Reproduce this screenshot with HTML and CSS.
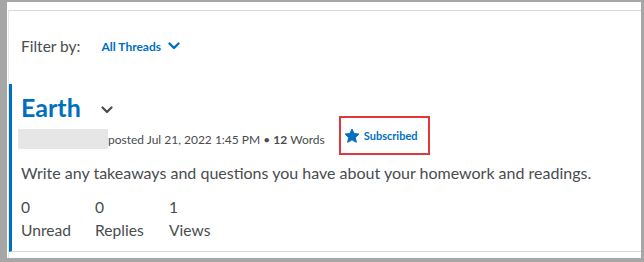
FILE: index.html
```html
<!DOCTYPE html>
<html lang="en">
<head>
    <meta charset="UTF-8">
    <title>Discussion - Earth</title>
    <link rel="stylesheet" href="styles.css">
</head>
<body>
    <div class="frame">
        <div class="panel">
            <!-- Filter bar -->
            <div class="filter">
                <span class="filter-label">Filter by:</span>
                <button class="filter-btn">All Threads
                    <svg width="12" height="8" viewBox="0 0 12 8"><path d="M1.5 1.5 L6 6 L10.5 1.5" fill="none" stroke="#006fbf" stroke-width="2.4" stroke-linecap="round" stroke-linejoin="round"/></svg>
                </button>
            </div>

            <!-- Thread -->
            <div class="thread">
                <div class="thread-head">
                    <h1 class="thread-title">Earth</h1>
                    <svg class="title-chevron" width="12" height="8" viewBox="0 0 12 8"><path d="M1.5 1.5 L6 6 L10.5 1.5" fill="none" stroke="#494c4e" stroke-width="2.2" stroke-linecap="round" stroke-linejoin="round"/></svg>
                </div>
                <div class="meta">
                    <span class="author"></span>
                    <span class="meta-text">posted Jul 21, 2022 1:45 PM &bull; <b>12</b> Words</span>
                    <span class="subscribed">
                        <svg width="16" height="16" viewBox="0 0 24 24"><path d="M12 1.5 L15.1 8.3 L22.5 9.1 L17 14.1 L18.5 21.5 L12 17.8 L5.5 21.5 L7 14.1 L1.5 9.1 L8.9 8.3 Z" fill="#006fbf" stroke="#006fbf" stroke-width="1.5" stroke-linejoin="round"/></svg>
                        Subscribed
                    </span>
                </div>
                <p class="thread-body">Write any takeaways and questions you have about your homework and readings.</p>
                <div class="stats">
                    <div class="stat"><span>0</span><span>Unread</span></div>
                    <div class="stat"><span>0</span><span>Replies</span></div>
                    <div class="stat"><span>1</span><span>Views</span></div>
                </div>
            </div>
        </div>
    </div>
</body>
</html>
```

FILE: styles.css
```css
html, body {
    height: 100%;
}
body {
    margin: 0;
    box-sizing: border-box;
    padding: 2px 3px 4px 7px;
    background-color: #a6a6a6;
    font-family: Lato, 'Noto Sans', sans-serif;
    color: #494c4e;
}
.frame {
    height: 100%;
    background-color: #ffffff;
    padding: 8px 0 0 1px;
    box-sizing: border-box;
}
.panel {
    height: 100%;
    border-top: 1px solid #d3d9e3;
    border-left: 1px solid #e3e8ef;
    box-sizing: border-box;
}
.filter {
    display: flex;
    align-items: center;
    height: 73px;
    padding: 0 0 3px 12px;
    box-sizing: border-box;
}
.filter-label {
    font-size: 15.5px;
}
.filter-btn {
    display: flex;
    align-items: center;
    gap: 7px;
    margin-left: 21px;
    padding: 0;
    border: none;
    background: none;
    color: #006fbf;
    font-family: Lato, sans-serif;
    font-size: 12px;
    font-weight: 700;
}
.thread {
    border-left: 3px solid #006fbf;
    border-bottom: 1px solid #d3d9e3;
    padding: 6px 0 0 9px;
    height: 168px;
    box-sizing: border-box;
}
.thread-head {
    display: flex;
    align-items: center;
}
.thread-title {
    margin: 0;
    font-size: 25px;
    font-weight: 700;
    color: #006fbf;
    line-height: 34px;
}
.title-chevron {
    margin: 6px 0 0 20px;
}
.meta {
    display: flex;
    align-items: center;
    margin-top: 5px;
    font-size: 12px;
}
.author {
    width: 90px;
    height: 20px;
    margin-left: -3px;
    background-color: #e6e6e6;
}
.meta-text b {
    font-weight: 700;
}
.subscribed {
    display: flex;
    align-items: center;
    gap: 4px;
    height: 39px;
    box-sizing: border-box;
    margin: -13px 0 -6px 14px;
    padding: 0 10px 0 3px;
    border: 2px solid #e0383a;
    color: #006fbf;
    font-size: 11px;
    font-weight: 700;
}
.thread-body {
    margin: 15px 0 0;
    font-size: 16px;
    line-height: 18px;
}
.stats {
    display: flex;
    margin-top: 14px;
}
.stat {
    display: flex;
    flex-direction: column;
    width: 74px;
    font-size: 15.6px;
    line-height: 23px;
}
```
